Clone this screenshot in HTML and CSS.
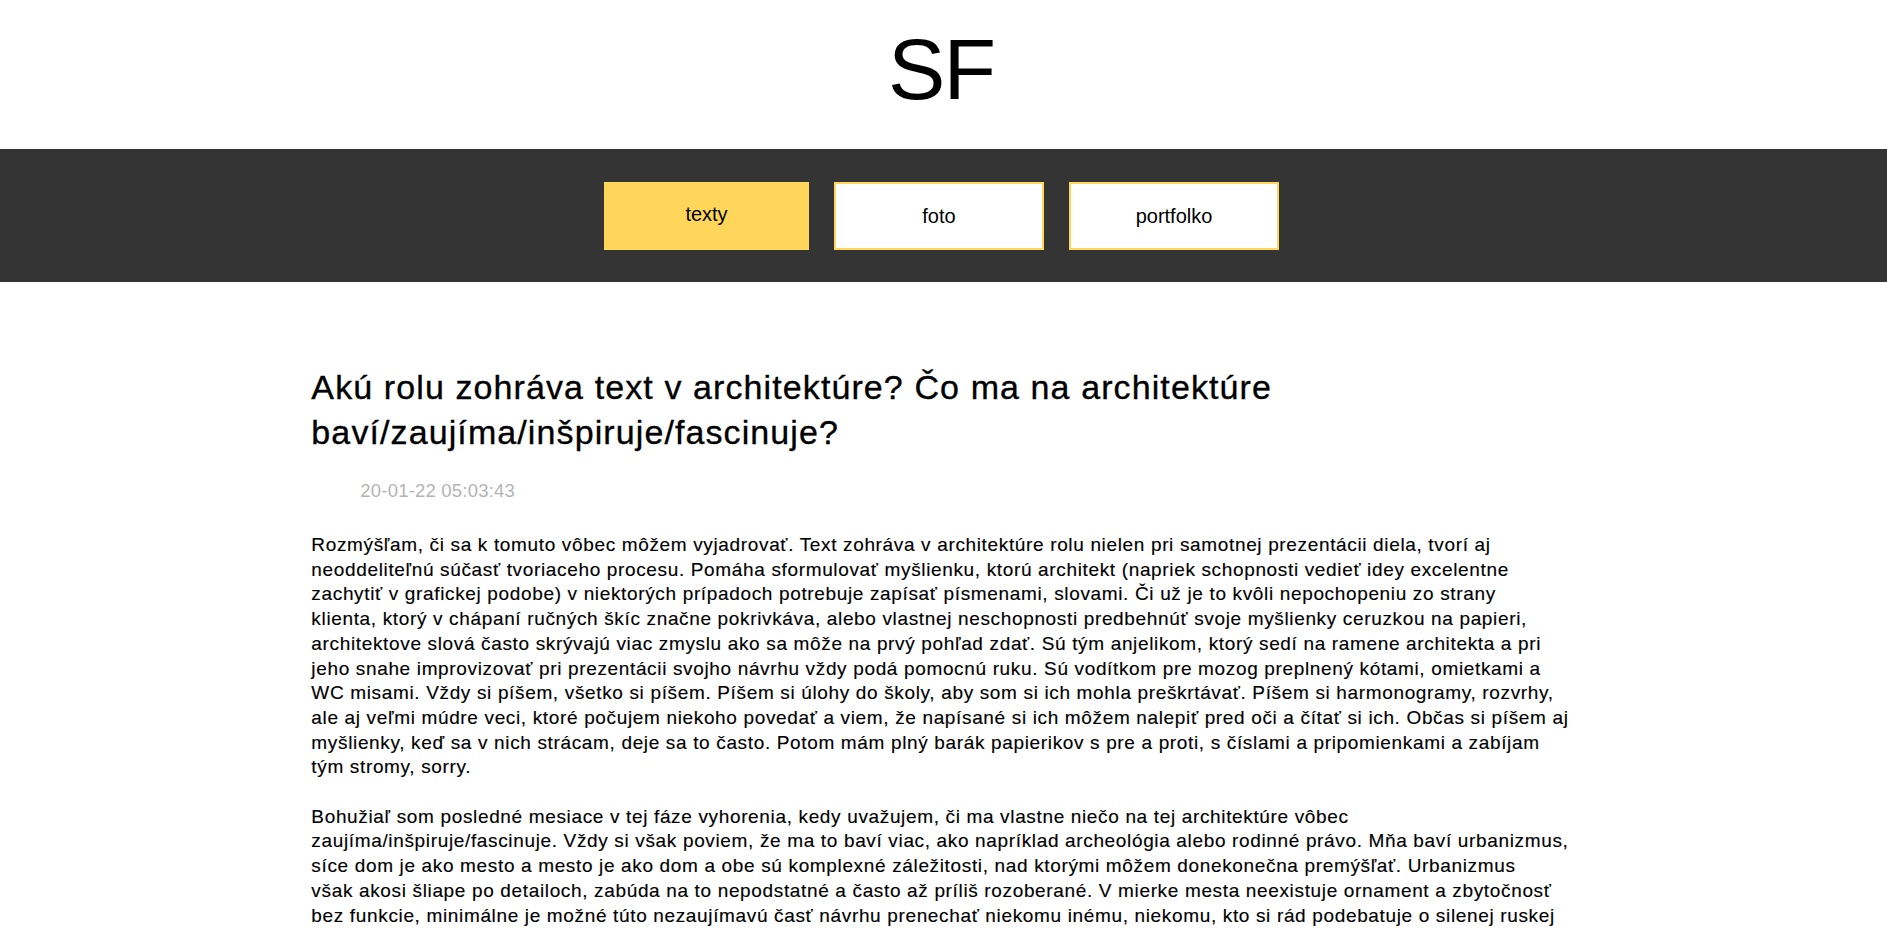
FILE: index.html
```html
<!DOCTYPE html>
<html lang="sk">
<head>
<meta charset="utf-8">
<title>SF – texty</title>
<link rel="stylesheet" href="styles.css">
</head>
<body>
<header class="site-header">
  <div class="logo">SF</div>
</header>
<nav class="site-nav">
  <a class="nav-btn nav-btn--active" href="#">texty</a>
  <a class="nav-btn" href="#">foto</a>
  <a class="nav-btn" href="#">portfolko</a>
</nav>
<main class="content">
  <article class="post">
    <h1 class="post-title">Akú rolu zohráva text v architektúre? Čo ma na architektúre baví/zaujíma/inšpiruje/fascinuje?</h1>
    <div class="post-date">20-01-22 05:03:43</div>
    <div class="post-body">
      <p>Rozmýšľam, či sa k tomuto vôbec môžem vyjadrovať. Text zohráva v architektúre rolu nielen pri samotnej prezentácii diela, tvorí aj<br>
neoddeliteľnú súčasť tvoriaceho procesu. Pomáha sformulovať myšlienku, ktorú architekt (napriek schopnosti vedieť idey excelentne<br>
zachytiť v grafickej podobe) v niektorých prípadoch potrebuje zapísať písmenami, slovami. Či už je to kvôli nepochopeniu zo strany<br>
klienta, ktorý v chápaní ručných škíc značne pokrivkáva, alebo vlastnej neschopnosti predbehnúť svoje myšlienky ceruzkou na papieri,<br>
architektove slová často skrývajú viac zmyslu ako sa môže na prvý pohľad zdať. Sú tým anjelikom, ktorý sedí na ramene architekta a pri<br>
jeho snahe improvizovať pri prezentácii svojho návrhu vždy podá pomocnú ruku. Sú vodítkom pre mozog preplnený kótami, omietkami a<br>
WC misami. Vždy si píšem, všetko si píšem. Píšem si úlohy do školy, aby som si ich mohla preškrtávať. Píšem si harmonogramy, rozvrhy,<br>
ale aj veľmi múdre veci, ktoré počujem niekoho povedať a viem, že napísané si ich môžem nalepiť pred oči a čítať si ich. Občas si píšem aj<br>
myšlienky, keď sa v nich strácam, deje sa to často. Potom mám plný barák papierikov s pre a proti, s číslami a pripomienkami a zabíjam<br>
tým stromy, sorry.</p>
      <p>Bohužiaľ som posledné mesiace v tej fáze vyhorenia, kedy uvažujem, či ma vlastne niečo na tej architektúre vôbec<br>
zaujíma/inšpiruje/fascinuje. Vždy si však poviem, že ma to baví viac, ako napríklad archeológia alebo rodinné právo. Mňa baví urbanizmus,<br>
síce dom je ako mesto a mesto je ako dom a obe sú komplexné záležitosti, nad ktorými môžem donekonečna premýšľať. Urbanizmus<br>
však akosi šliape po detailoch, zabúda na to nepodstatné a často až príliš rozoberané. V mierke mesta neexistuje ornament a zbytočnosť<br>
bez funkcie, minimálne je možné túto nezaujímavú časť návrhu prenechať niekomu inému, niekomu, kto si rád podebatuje o silenej ruskej</p>
    </div>
  </article>
</main>
</body>
</html>
```

FILE: styles.css
```css
html, body {
  margin: 0;
  padding: 0;
  background: #ffffff;
}

body {
  font-family: "Liberation Sans", Arial, sans-serif;
  color: #000000;
}

.site-header {
  height: 149px;
  box-sizing: border-box;
  padding-top: 26px;
  padding-right: 5px;
  display: flex;
  justify-content: center;
}

.logo {
  font-size: 86px;
  line-height: 86px;
  height: 86px;
  letter-spacing: -2px;
  color: #000;
}

.site-nav {
  background: #343434;
  height: 133px;
  box-sizing: border-box;
  padding-top: 33px;
  padding-right: 4px;
  display: flex;
  justify-content: center;
  align-items: flex-start;
  gap: 25px;
}

.nav-btn {
  box-sizing: border-box;
  width: 210px;
  height: 68px;
  border: 2px solid #ffd65a;
  background: #ffffff;
  color: #000;
  text-decoration: none;
  font-size: 20px;
  display: flex;
  align-items: center;
  justify-content: center;
}

.nav-btn--active {
  width: 205px;
  background: #ffd65a;
  padding-bottom: 3px;
}

.content {
  width: 67%;
  margin: 0 auto;
  padding-top: 83px;
}

.post-title {
  margin: 0;
  font-size: 34px;
  line-height: 45px;
  font-weight: normal;
  letter-spacing: 1.1px;
  -webkit-text-stroke: 0.35px #000;
  max-width: 1000px;
}

.post-date {
  margin-top: 24px;
  padding-left: 49px;
  font-size: 18.5px;
  line-height: 24px;
  letter-spacing: 0.2px;
  color: #b4b4b4;
}

.post-body {
  margin-top: 30px;
  margin-right: -30px;
  font-size: 19px;
  line-height: 24.7px;
  letter-spacing: 0.65px;
  -webkit-text-stroke: 0.15px #000;
}

.post-body p {
  margin: 0 0 24.7px;
}
```
